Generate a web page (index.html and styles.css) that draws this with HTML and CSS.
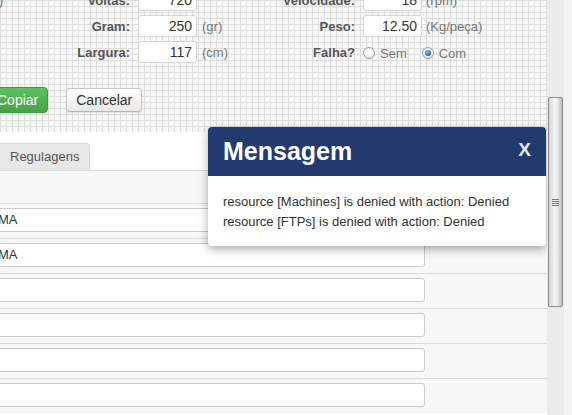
FILE: index.html
```html
<!DOCTYPE html>
<html lang="pt">
<head>
<meta charset="utf-8">
<title>Mensagem</title>
<link rel="stylesheet" href="styles.css">
</head>
<body>
<div class="viewport">
  <div class="main">
    <section class="form-area">
      <div class="form-grid">
        <div class="lbl lbl-first"><span class="cut">)</span><span>Voltas:</span></div>
        <div class="fld"><input class="inp" value="720" readonly></div>
        <div class="unit"></div>
        <div class="lbl">Velocidade:</div>
        <div class="fld"><input class="inp" value="18" readonly></div>
        <div class="unit unit2">(rpm)</div>

        <div class="lbl">Gram:</div>
        <div class="fld"><input class="inp" value="250" readonly></div>
        <div class="unit">(gr)</div>
        <div class="lbl">Peso:</div>
        <div class="fld"><input class="inp" value="12.50" readonly></div>
        <div class="unit unit2">(Kg/peça)</div>

        <div class="lbl">Largura:</div>
        <div class="fld"><input class="inp" value="117" readonly></div>
        <div class="unit">(cm)</div>
        <div class="lbl">Falha?</div>
        <div class="radios">
          <span class="radio"></span><span class="rlabel">Sem</span>
          <span class="radio on gap"></span><span class="rlabel">Com</span>
        </div>
      </div>
      <div class="actions">
        <button class="btn btn-success">Copiar</button>
        <button class="btn">Cancelar</button>
      </div>
    </section>

    <section class="tabs-area">
      <div class="tabbar"><div class="tab">Regulagens</div></div>
      <div class="panel">
        <div class="panel-head"></div>
        <div class="row"><div class="field">MA</div></div>
        <div class="row"><div class="field">MA</div></div>
        <div class="row"><div class="field"></div></div>
        <div class="row"><div class="field"></div></div>
        <div class="row"><div class="field"></div></div>
        <div class="row"><div class="field"></div></div>
      </div>
    </section>

    <div class="modal">
      <div class="modal-head">
        <span class="modal-title">Mensagem</span>
        <span class="modal-close">X</span>
      </div>
      <div class="modal-body">
        <div>resource [Machines] is denied with action: Denied</div>
        <div>resource [FTPs] is denied with action: Denied</div>
      </div>
    </div>
  </div>
  <div class="vscroll"><div class="thumb"><span class="grip"></span></div></div>
  <div class="edge"></div>
</div>
</body>
</html>
```

FILE: styles.css
```css
* { box-sizing: border-box; }
html, body { margin: 0; padding: 0; }
body {
  width: 572px;
  height: 415px;
  overflow: hidden;
  font-family: "Liberation Sans", Arial, sans-serif;
  color: #333;
  background: #fff;
}
.viewport { display: flex; height: 415px; }
.main { position: relative; width: 547px; flex: none; overflow: hidden; }

/* top form on grid paper */
.form-area {
  height: 132px;
  overflow: hidden;
  background-color: #f8f8f8;
  background-image:
    linear-gradient(#dddddd 1px, transparent 1px),
    linear-gradient(90deg, #dddddd 1px, transparent 1px);
  background-size: 6px 6px;
}
.form-grid {
  display: grid;
  grid-template-columns: 130px 67px 50px 108px 67px 1fr;
  grid-auto-rows: 22px;
  row-gap: 4px;
  margin-top: -11px;
  align-items: center;
}
.lbl {
  text-align: right;
  font-weight: bold;
  font-size: 13px;
  color: #555;
  white-space: nowrap;
}
.lbl-first { display: flex; justify-content: space-between; }
.cut { font-weight: normal; color: #777; margin-left: -1px; }
.fld { height: 22px; }
.inp {
  display: block;
  margin: 0 0 0 8px;
  width: 59px;
  height: 22px;
  border: 1px solid #d6d6d6;
  border-radius: 3px;
  background: #fff;
  font: 14px "Liberation Sans", Arial, sans-serif;
  color: #333;
  text-align: right;
  padding: 0 4px;
  outline: none;
}
.unit { padding-left: 5px; font-size: 13px; color: #777; white-space: nowrap; }
.unit2 { padding-left: 4px; }
.radios {
  grid-column: span 2;
  display: flex;
  align-items: center;
  padding-left: 8px;
  padding-top: 2px;
  font-size: 13px;
  color: #777;
}
.radio {
  position: relative;
  width: 12px;
  height: 12px;
  border: 1px solid #a0a0a0;
  border-radius: 50%;
  background: radial-gradient(circle at 50% 40%, #ffffff 0%, #f0f0f0 50%, #d8d8d8 100%);
}
.radio.on::after {
  content: "";
  position: absolute;
  left: 2px;
  top: 2px;
  width: 6px;
  height: 6px;
  border-radius: 50%;
  background: radial-gradient(circle at 40% 35%, #8ec0f0 0%, #2f72c4 55%, #183f80 100%);
}
.radio.gap { margin-left: 15px; }
.rlabel { margin-left: 5px; }

.actions {
  display: flex;
  align-items: center;
  gap: 18px;
  margin-top: 24px;
  margin-left: -13px;
}
.btn {
  font: 14px "Liberation Sans", Arial, sans-serif;
  height: 24px;
  padding: 0 9px;
  border: 1px solid #c8c8c8;
  border-bottom-color: #b5b5b5;
  border-radius: 4px;
  color: #333;
  background: linear-gradient(#ffffff, #e8e8e8);
  box-shadow: 0 1px 2px rgba(0, 0, 0, 0.08);
}
.btn-success {
  height: 26px;
  color: #fff;
  border-color: #3f973f;
  background: linear-gradient(#5ec25e, #45a345);
}

/* tabs + table */
.tabs-area { padding-top: 11px; background: #fff; }
.tabbar { display: flex; height: 28px; border-bottom: 1px solid #dcdcdc; }
.tab {
  width: 90px;
  height: 27px;
  padding-left: 10px;
  line-height: 26px;
  font-size: 13px;
  color: #555;
  background: #e7e7e7;
  border-top: 1px solid #dadada;
  border-right: 1px solid #dadada;
  border-radius: 0 4px 0 0;
}
.panel { background: #f7f7f7; }
.panel-head { height: 32px; }
.row { border-top: 1px solid #d9d9d9; padding: 4px 0 6px; }
.field {
  margin-left: -10px;
  width: 435px;
  height: 24px;
  border: 1px solid #cccccc;
  border-radius: 3px;
  background: #fff;
  padding-left: 7px;
  font-size: 13px;
  line-height: 22px;
  color: #333;
}

/* modal overlay */
.modal {
  position: absolute;
  left: 208px;
  top: 127px;
  width: 338px;
  border-radius: 4px;
  overflow: hidden;
  background: #fff;
  box-shadow: 0 3px 10px rgba(0, 0, 0, 0.35);
}
.modal-head {
  height: 49px;
  display: flex;
  align-items: center;
  justify-content: space-between;
  padding: 0 15px;
  background: #223a70;
  color: #fff;
}
.modal-title { font-size: 25px; font-weight: bold; line-height: 25px; }
.modal-close { font-size: 19px; font-weight: bold; color: #e3e7ef; line-height: 19px; margin-top: -4px; }
.modal-body { padding: 16px 15px 14px; font-size: 13px; line-height: 20px; color: #333; }

/* scrollbar */
.vscroll { width: 17px; flex: none; background: #ebebeb; padding-top: 97px; }
.thumb {
  margin-left: 1px;
  width: 15px;
  height: 210px;
  border: 1px solid #8c8c8c;
  border-radius: 2px;
  background: linear-gradient(90deg, #d4d4d4, #f8f8f8 45%, #e4e4e4 70%, #bcbcbc);
  display: flex;
  align-items: center;
  justify-content: center;
}
.grip {
  width: 7px;
  height: 7px;
  background: repeating-linear-gradient(#777 0 1px, transparent 1px 2px);
}
.edge { flex: 1; background: #f4f4f4; }
```
